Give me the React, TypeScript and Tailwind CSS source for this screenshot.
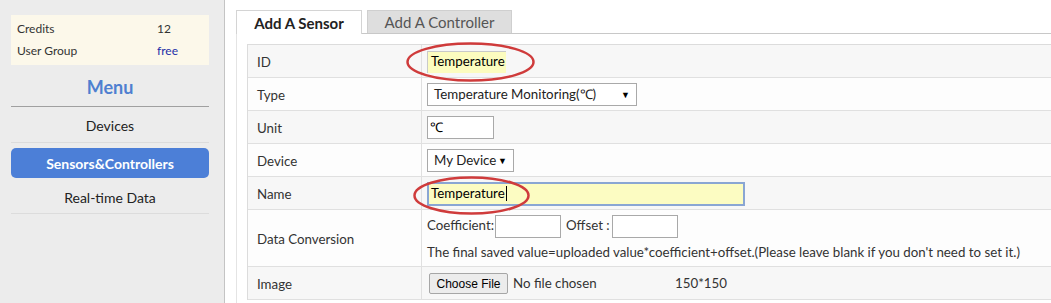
import React from "react";

const font = { fontFamily: "Lato, 'Open Sans', sans-serif" };

function SelectBox({ label, width }: { label: string; width: string }) {
  return (
    <div
      className={`flex h-[23px] ${width} items-center justify-between border border-[#a9a9a9] bg-white pl-[6px] pr-[6px] text-[13.3px] text-[#222]`}
    >
      <span>{label}</span>
      <span className="text-[9px] text-black">▼</span>
    </div>
  );
}

function Row({
  label,
  shade,
  height = "h-[33px]",
  children,
}: {
  label: string;
  shade: boolean;
  height?: string;
  children: React.ReactNode;
}) {
  return (
    <div
      className={`flex ${height} border-b border-[#e0e0e0] ${shade ? "bg-[#f7f7f7]" : "bg-[#fdfdfd]"}`}
    >
      <div className="flex w-[174px] shrink-0 items-center border-r border-[#e0e0e0] pl-[9px] pt-[3px] text-[13.3px] text-[#333]">
        {label}
      </div>
      <div className="flex flex-1 items-center pl-[5px] pt-[1px]">{children}</div>
    </div>
  );
}

function Ellipse({ className, w, h }: { className: string; w: number; h: number }) {
  return (
    <svg
      className={`pointer-events-none absolute ${className}`}
      width={w}
      height={h}
      viewBox={`0 0 ${w} ${h}`}
    >
      <ellipse
        cx={w / 2}
        cy={h / 2}
        rx={w / 2 - 1.5}
        ry={h / 2 - 1.5}
        fill="none"
        stroke="#cf3b3b"
        strokeWidth="2.5"
      />
    </svg>
  );
}

export default function App() {
  return (
    <div className="flex h-[303px] w-[1051px] overflow-hidden bg-white" style={font}>
      {/* sidebar */}
      <aside className="h-full w-[225px] shrink-0 border-r border-[#c4c4c4] bg-[#ececec] pl-[11px] pt-[15px]">
        <div className="w-[198px]">
          <div className="bg-[#fcf8ea] px-[6px] py-[3px] text-[12px] text-[#333]">
            <div className="flex h-[22px] items-center">
              <span className="w-[140px]">Credits</span>
              <span>12</span>
            </div>
            <div className="flex h-[22px] items-center">
              <span className="w-[140px]">User Group</span>
              <span className="text-[#1c2fa8]">free</span>
            </div>
          </div>
          <div className="flex h-[42px] items-center justify-center border-b border-[#a0a0a0] pt-[3px] text-[18px] font-bold text-[#4f7fd0]">
            Menu
          </div>
          <div className="flex h-[36px] items-center justify-center border-b border-[#dcdcdc] pt-[2px] text-[14px] text-[#222]">
            Devices
          </div>
          <div className="mt-[5px] flex h-[30px] items-center justify-center rounded-[5px] bg-[#4c7fd7] text-[14px] font-bold text-white">
            Sensors&amp;Controllers
          </div>
          <div className="flex h-[36px] items-center justify-center border-b border-[#dcdcdc] pt-[3px] text-[14px] text-[#222]">
            Real-time Data
          </div>
        </div>
      </aside>

      {/* main */}
      <main className="flex-1 pl-[11px] pt-[10px]">
        <div className="flex h-[24px] items-end">
          <div className="flex h-[24px] w-[126px] items-center justify-center border border-b-0 border-[#d4d4d4] bg-white pt-[1px] text-[15px] font-bold text-[#222]">
            Add A Sensor
          </div>
          <div className="flex-1 self-stretch border-b border-[#c8c8c8] pl-[5px]">
            <div className="flex h-[23px] w-[145px] items-center justify-center border border-b-0 border-[#cfcfcf] bg-[#dedede] pt-[1px] text-[15px] text-[#555]">
              Add A Controller
            </div>
          </div>
        </div>
        <div className="h-full border-l border-[#e4e4e4] pl-[10px] pt-[10px]">
          <div className="relative border-l border-t border-[#dcdcdc]">
            <Row label="ID" shade>
              <div className="flex h-[22px] w-[79px] items-center overflow-hidden whitespace-nowrap border-l border-t border-[#c9c9c9] bg-[#fcfcbf] pl-[3px] text-[13.3px] text-black">
                Temperature
              </div>
            </Row>
            <Row label="Type" shade={false}>
              <SelectBox label="Temperature Monitoring(℃)" width="w-[210px]" />
            </Row>
            <Row label="Unit" shade>
              <div className="flex h-[23px] w-[67px] items-center border border-[#a9a9a9] bg-white pl-[2px] text-[13.3px] text-black">
                ℃
              </div>
            </Row>
            <Row label="Device" shade={false}>
              <SelectBox label="My Device" width="w-[87px]" />
            </Row>
            <Row label="Name" shade>
              <div className="flex h-[24px] w-[318px] items-center border-2 border-[#8aa6d3] bg-[#fcfcc2] pl-[2px] text-[13.3px] text-black">
                Temperature
                <span className="ml-[1px] inline-block h-[15px] w-px bg-black" />
              </div>
            </Row>
            <Row label="Data Conversion" shade={false} height="h-[57px]">
              <div className="flex flex-col gap-[5px] text-[13.3px] text-[#333]">
                <div className="flex items-center">
                  <span>Coefficient:</span>
                  <span className="ml-[1px] h-[23px] w-[66px] border border-[#a9a9a9] bg-white" />
                  <span className="ml-[5px]">Offset :</span>
                  <span className="ml-[2px] h-[23px] w-[66px] border border-[#a9a9a9] bg-white" />
                </div>
                <div className="whitespace-nowrap">
                  The final saved value=uploaded value*coefficient+offset.(Please leave blank if you don't need to set it.)
                </div>
              </div>
            </Row>
            <Row label="Image" shade>
              <div className="flex items-center text-[13.3px] text-[#333]">
                <span
                  className="ml-[2px] flex h-[21px] w-[79px] items-center justify-center rounded-[2px] border border-[#a6a6a6] bg-[#ececec] text-[12px] text-black"
                  style={{ fontFamily: "'Liberation Sans', Arial, sans-serif" }}
                >
                  Choose File
                </span>
                <span className="ml-[5px] w-[162px]">No file chosen</span>
                <span>150*150</span>
              </div>
            </Row>
            <Ellipse className="left-[158px] top-[-3px]" w={129} h={40} />
            <Ellipse className="left-[165px] top-[131px]" w={117} h={39} />
          </div>
        </div>
      </main>
    </div>
  );
}
